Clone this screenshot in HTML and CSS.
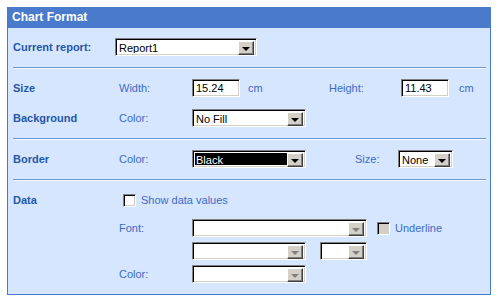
FILE: index.html
```html
<!DOCTYPE html>
<html lang="en">
<head>
    <meta charset="UTF-8">
    <title>Chart Format</title>
    <link rel="stylesheet" href="styles.css">
</head>
<body>
    <div class="panel">
        <div class="panel-title">Chart Format</div>

        <div class="section first">
            <div class="row">
                <span class="head head-wide">Current report:</span>
                <div class="combo w-report"><span class="combo-text">Report1</span><span class="combo-btn"><i class="arrow"></i></span></div>
            </div>
        </div>

        <div class="section">
            <div class="row">
                <span class="head">Size</span>
                <span class="sub">Width:</span>
                <div class="field w-num">15.24</div>
                <span class="unit unit-gap">cm</span>
                <span class="sub sub-height">Height:</span>
                <div class="field w-num">11.43</div>
                <span class="unit">cm</span>
            </div>
            <div class="row">
                <span class="head">Background</span>
                <span class="sub">Color:</span>
                <div class="combo w-mid"><span class="combo-text">No Fill</span><span class="combo-btn"><i class="arrow"></i></span></div>
            </div>
        </div>

        <div class="section">
            <div class="row">
                <span class="head">Border</span>
                <span class="sub">Color:</span>
                <div class="combo w-mid selected"><span class="combo-text">Black</span><span class="combo-btn"><i class="arrow"></i></span></div>
                <span class="sub sub-size">Size:</span>
                <div class="combo w-small"><span class="combo-text">None</span><span class="combo-btn"><i class="arrow"></i></span></div>
            </div>
        </div>

        <div class="section last">
            <div class="row row-check">
                <span class="head">Data</span>
                <span class="check"></span>
                <span class="check-label">Show data values</span>
            </div>
            <div class="row">
                <span class="head"></span>
                <span class="sub">Font:</span>
                <div class="combo w-wide disabled"><span class="combo-text"></span><span class="combo-btn"><i class="arrow"></i></span></div>
                <span class="check check-off"></span>
                <span class="check-label">Underline</span>
            </div>
            <div class="row">
                <span class="head"></span>
                <span class="sub"></span>
                <div class="combo w-mid disabled"><span class="combo-text"></span><span class="combo-btn"><i class="arrow"></i></span></div>
                <div class="combo w-tiny disabled"><span class="combo-text"></span><span class="combo-btn"><i class="arrow"></i></span></div>
            </div>
            <div class="row">
                <span class="head"></span>
                <span class="sub">Color:</span>
                <div class="combo w-mid disabled"><span class="combo-text"></span><span class="combo-btn"><i class="arrow"></i></span></div>
            </div>
        </div>
    </div>
</body>
</html>
```

FILE: styles.css
```css
* {
    margin: 0;
    padding: 0;
    box-sizing: border-box;
}

body {
    background-color: #ffffff;
    font-family: "Liberation Sans", Arial, sans-serif;
    font-size: 11px;
    padding: 7px;
}

.panel {
    width: 484px;
    height: 288px;
    background-color: #d6e6ff;
    border: 1px solid #4a7acc;
    border-top: none;
}

.panel-title {
    background-color: #4a7acc;
    color: #ffffff;
    font-weight: bold;
    font-size: 12px;
    height: 21px;
    line-height: 21px;
    padding-left: 5px;
    margin: 0 -1px;
}

.section {
    margin: 0 4px 0 5px;
    padding: 11px 0 11px;
    border-top: 1px solid #6a96d8;
    box-shadow: inset 0 1px 0 #f4f8ff;
    display: flex;
    flex-direction: column;
    gap: 12px;
}

.section.first {
    border-top: none;
    box-shadow: none;
    padding-top: 10px;
}

.section.last {
    gap: 5px;
    padding-top: 11px;
}

.row {
    display: flex;
    align-items: center;
    height: 18px;
}

.row > * {
    flex-shrink: 0;
}

.row-check {
    margin-bottom: 5px;
}

.head {
    width: 106px;
    color: #2456a8;
    font-weight: bold;
}

.head-wide {
    width: 102px;
}

.sub {
    width: 73px;
    color: #3a6cc6;
}

.sub-height {
    width: 72px;
}

.sub-size {
    width: 43px;
    margin-left: 49px;
}

.unit {
    color: #3a6cc6;
    padding-left: 10px;
}

.unit-gap {
    width: 89px;
    padding-left: 8px;
}

.field,
.combo {
    height: 18px;
    background-color: #ffffff;
    border: 1px solid;
    border-color: #808080 #ffffff #ffffff #808080;
    box-shadow: inset 1px 1px 0 #000000, inset -1px -1px 0 #d4d0c8;
    color: #000000;
}

.field {
    padding: 2px 0 0 3px;
    line-height: 13px;
}

.w-num { width: 48px; }
.w-report { width: 142px; }
.w-mid { width: 114px; }
.w-small { width: 55px; }
.w-wide { width: 175px; }
.w-tiny { width: 47px; margin-left: 14px; }

.combo {
    display: flex;
    padding: 2px;
}

.combo-text {
    flex: 1;
    line-height: 14px;
    padding-left: 1px;
    overflow: hidden;
}

.combo.selected .combo-text {
    background-color: #000000;
    color: #ffffff;
}

.combo-btn {
    width: 16px;
    height: 14px;
    background-color: #d4d0c8;
    border: 1px solid;
    border-color: #ffffff #404040 #404040 #ffffff;
    box-shadow: inset -1px -1px 0 #808080;
    display: flex;
    align-items: center;
    justify-content: center;
}

.arrow {
    width: 0;
    height: 0;
    border-left: 4px solid transparent;
    border-right: 4px solid transparent;
    border-top: 4px solid #000000;
    margin: 1px 1px 0 0;
}

.combo.disabled .arrow {
    border-top-color: #808080;
}

.check {
    width: 13px;
    height: 13px;
    margin-left: 4px;
    background-color: #ffffff;
    border: 1px solid;
    border-color: #808080 #ffffff #ffffff #808080;
    box-shadow: inset 1px 1px 0 #000000, inset -1px -1px 0 #d4d0c8;
}

.check-off {
    background-color: #d4d0c8;
    margin-left: 10px;
}

.check-label {
    color: #3a6cc6;
    margin-left: 5px;
}
```
